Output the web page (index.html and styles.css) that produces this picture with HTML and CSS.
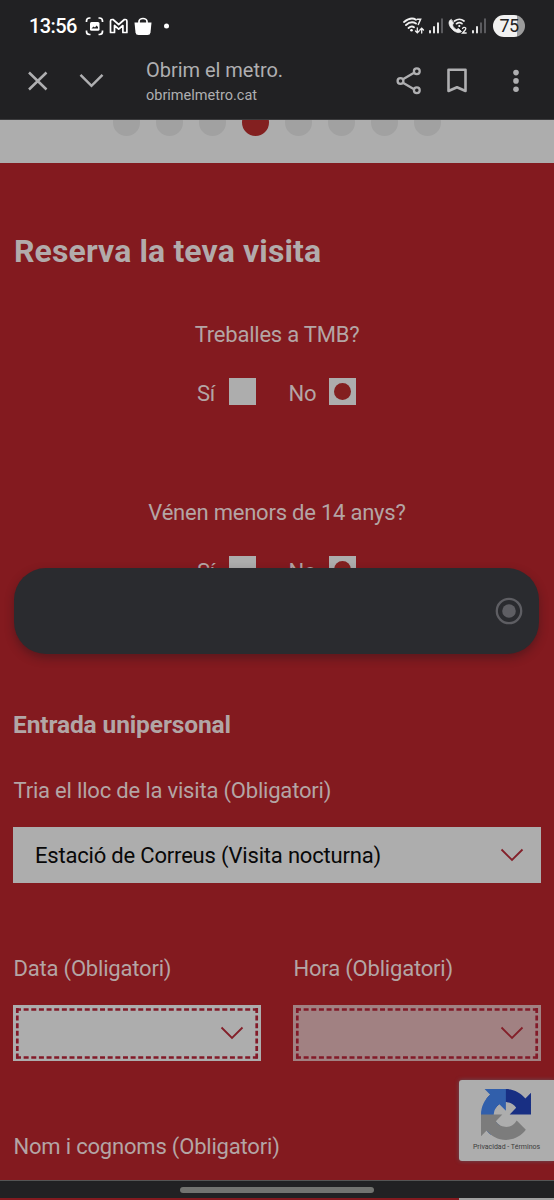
FILE: index.html
```html
<!DOCTYPE html>
<html lang="ca">
<head>
<meta charset="utf-8">
<title>Obrim el metro.</title>
<link rel="stylesheet" href="styles.css">
</head>
<body>
<div class="screen">
  <header class="chrome">
    <div class="status">
      <span class="clock">13:56</span>
      <svg class="status-left" width="84" height="24" viewBox="84 14 84 24" fill="none" stroke="#fff">
        <path d="M90.500 18h-1a3 3 0 0 0-3 3v1M98.500 18h1a3 3 0 0 1 3 3v1M90.500 34.500h-1a3 3 0 0 1-3-3v-1M98.500 34.500h1a3 3 0 0 0 3-3v-1" stroke-width="1.700"/>
        <rect x="90" y="22" width="9.500" height="8.800" rx="1.500" fill="#fff" stroke="none"/>
        <path d="M91.500 28.500l2-2 1.500 1 1.500-2 1.500 1.500v1.500z" fill="#222224" stroke="none"/>
        <path d="M110.500 32.500V21q0-1.500 1.500-1.500h1l5.700 5 5.700-5h1q1.500 0 1.500 1.500v11.500h-4V25.500l-4.200 3.700-4.200-3.700v7z" stroke-width="1.700" stroke-linejoin="round"/>
        <path d="M134.500 22.500h17l-1 10q-.3 2.500-3 2.500h-9q-2.700 0-3-2.500z" fill="#fff" stroke="none"/>
        <path d="M139 23v-1.500a4 3 0 0 1 8 0V23" stroke-width="1.700"/>
        <circle cx="166.500" cy="26" r="2.500" fill="#fff" stroke="none"/>
      </svg>
      <svg class="status-right" width="84" height="24" viewBox="402 14 84 24" fill="none" stroke="#f0f0f0" stroke-linecap="round">
        <path d="M404 22q7-5.500 12-2.200M406 25q5-4.500 10-1.500M408.500 28q3-2.500 5.500-.8" stroke-width="1.900"/>
        <circle cx="411.500" cy="30.300" r="1.300" fill="#fff" stroke="none"/>
        <path d="M417.300 19.300h3.300l-2.300 5.200" stroke-width="1.500"/>
        <path d="M417.300 28v4.500m-1.800-1.500 1.800 1.800 1.800-1.800M421.700 33v-4.500m-1.800 1.500 1.800-1.800 1.800 1.800" stroke-width="1.300"/>
        <path d="M430 31v1.500M434 27v5.500M438 23.200v9.300" stroke-width="1.900"/>
        <path d="M442 19v13.500" stroke="#66666a" stroke-width="1.700"/>
        <path d="M451 19.500c-3 1.500-2.500 5.500.5 9s7.500 5.500 10 3l-3-3-2 1c-2-1-3.500-2.500-4-4.500l1-2z" fill="#f0f0f0" stroke-width=".8"/>
        <path d="M454.500 21q5-3.500 9.500 0M456.500 23.700q3-2 5.500 0" stroke-width="1.700"/>
        <circle cx="459.300" cy="26" r="1.100" fill="#fff" stroke="none"/>
        <path d="M462.500 28.500q1-1.500 2.500-1t.2 2.500l-2.700 3h3.700" stroke-width="1.300"/>
        <path d="M473 31v1.500M477 27v5.500" stroke-width="1.900"/>
        <path d="M481 23.200v9.300M485 19v13.500" stroke="#66666a" stroke-width="1.700"/>
      </svg>
      <span class="battery">75</span>
    </div>
    <div class="toolbar">
      <svg width="78" height="24" viewBox="27 69 78 24" fill="none" stroke="#afafb1" stroke-width="2.500"><path d="M29 72.500l17.500 17M46.500 72.500L29 89.500M80.500 74.800l11 11 11-11"/></svg>
      <div class="page-info"><span class="page-title">Obrim el metro.</span><span class="page-url">obrimelmetro.cat</span></div>
      <svg width="124" height="30" viewBox="396 66 124 30" fill="none" stroke="#afafb1" stroke-width="2.300">
        <path d="M402.500 79.500l12-7M402.500 82.500l12 7"/>
        <circle cx="400.500" cy="81" r="2.900"/><circle cx="416.800" cy="71.300" r="2.900"/><circle cx="416.800" cy="90.300" r="2.900"/>
        <path d="M448.500 69.800h17V91l-8.500-3.700-8.500 3.700z" stroke-width="2.600" stroke-linejoin="round"/>
        <g fill="#afafb1" stroke="none"><circle cx="516" cy="72.600" r="2.800"/><circle cx="516" cy="80.900" r="2.800"/><circle cx="516" cy="89.200" r="2.800"/></g>
      </svg>
    </div>
  </header>
  <div class="steps"><i></i><i></i><i></i><i class="current"></i><i></i><i></i><i></i><i></i></div>
  <main class="form">
    <h1>Reserva la teva visita</h1>
    <section class="question">
      <p>Treballes a TMB?</p>
      <div class="options"><span>Sí</span><b class="radio"></b><span class="no">No</span><b class="radio checked"></b></div>
    </section>
    <section class="question">
      <p>Vénen menors de 14 anys?</p>
      <div class="options"><span>Sí</span><b class="radio"></b><span class="no">No</span><b class="radio checked"></b></div>
    </section>
    <h2>Entrada unipersonal</h2>
    <label class="place">Tria el lloc de la visita (Obligatori)</label>
    <div class="select"><span>Estació de Correus (Visita nocturna)</span><svg class="arrow" width="24" height="14" viewBox="0 0 24 14"><path d="M1.500 1.500L12 12 22.500 1.500"/></svg></div>
    <div class="row">
      <div class="field"><label>Data (Obligatori)</label>
        <div class="select required"><svg class="dashes" width="248" height="56"><path class="h" d="M3 4.500h242M3 52.500h242"/><path class="v" d="M4.300 3v51M243.700 3v51"/></svg><svg class="arrow" width="24" height="14" viewBox="0 0 24 14"><path d="M1.500 1.500L12 12 22.500 1.500"/></svg></div></div>
      <div class="field"><label>Hora (Obligatori)</label>
        <div class="select required disabled"><svg class="dashes" width="248" height="56"><path class="h" d="M3 4.500h242M3 52.500h242"/><path class="v" d="M4.300 3v51M243.700 3v51"/></svg><svg class="arrow" width="24" height="14" viewBox="0 0 24 14"><path d="M1.500 1.500L12 12 22.500 1.500"/></svg></div></div>
    </div>
    <label class="name">Nom i cognoms (Obligatori)</label>
  </main>
  <div class="toast"><svg width="28" height="28" viewBox="0 0 28 28"><circle cx="14" cy="14" r="12.200" fill="none" stroke="#5e5e63" stroke-width="2.300"/><circle cx="14" cy="14" r="6.800" fill="#5e5e63"/></svg></div>
  <aside class="captcha">
    <svg width="50" height="51" viewBox="0 0 64 64" preserveAspectRatio="none">
      <path fill="#182f83" d="M64 31.955l-.033-1.370V4.687l-7.160 7.160C50.948 4.674 42.033.093 32.050.093c-10.400 0-19.622 4.960-25.458 12.640l11.736 11.860a15.550 15.550 0 0 1 4.754-5.334c2.050-1.600 4.952-2.906 8.968-2.906.485 0 .860.057 1.135.163 4.976.393 9.288 3.140 11.828 7.124l-8.307 8.307L64 31.953"/>
      <path fill="#315fab" d="M31.862.094l-1.370.033H4.594l7.160 7.160C4.580 13.147 0 22.060 0 32.046c0 10.400 4.960 19.622 12.640 25.458L24.500 45.768a15.550 15.550 0 0 1-5.334-4.754c-1.600-2.050-2.906-4.952-2.906-8.968 0-.485.057-.860.163-1.135.393-4.976 3.140-9.288 7.124-11.828l8.307 8.307L31.860.095"/>
      <path fill="#7c7c7c" d="M.001 32.045l.033 1.370v25.898l7.160-7.160c5.860 7.173 14.774 11.754 24.760 11.754 10.400 0 19.622-4.960 25.458-12.640l-11.736-11.860a15.550 15.550 0 0 1-4.754 5.334c-2.050 1.600-4.952 2.906-8.968 2.906-.485 0-.860-.057-1.135-.163-4.976-.393-9.288-3.140-11.828-7.124l8.307-8.307c-10.522.040-22.400.066-27.295-.005"/>
    </svg>
    <span>Privacidad - Términos</span>
  </aside>
  <div class="navbar"><i></i></div>
  <div class="below"></div>
</div>
</body>
</html>
```

FILE: styles.css
```css
* { box-sizing: border-box; }
body { margin: 0; font-family: Roboto, sans-serif; }
.screen { position: relative; width: 554px; height: 1200px; overflow: hidden; background: #831a1f; color: #b4a5a5; }
svg { display: block; flex: none; }
.chrome { height: 120px; background: #212123; border-bottom: 1px solid #3b3b3d; }
.status { display: flex; align-items: center; height: 52px; padding: 0 29px 0 29px; }
.clock { width: 55px; color: #fff; font: 500 20px/24px Roboto, sans-serif; letter-spacing: -0.6px; white-space: nowrap; }
.status-left { overflow: visible; }
.status-right { margin-left: 234px; overflow: visible; }
.battery { width: 32px; height: 22px; margin-left: 7px; border-radius: 11px; flex: none; background: linear-gradient(90deg, #f1f1f1 76%, #9c9c9c 76%); color: #222; font-size: 18px; line-height: 22px; letter-spacing: -0.5px; text-align: center; }
.toolbar { display: flex; align-items: center; height: 58px; padding-left: 27px; }
.page-info { display: flex; flex-direction: column; width: 250px; margin-left: 41px; padding-top: 3px; color: #afafb1; }
.page-title { font-size: 20px; line-height: 26px; letter-spacing: -0.03px; }
.page-url { font-size: 14.500px; line-height: 25px; }
.steps { display: flex; justify-content: center; gap: 16px; height: 43px; overflow: hidden; background: #adadad; }
.steps i { width: 27px; height: 27px; margin-top: -11px; border-radius: 50%; background: #a1a1a1; }
.steps .current { background: #832020; }
.form { padding: 0 13px; font-size: 22px; letter-spacing: -0.19px; }
h1 { margin: 0; padding: 68px 0 0 1px; height: 152px; font-size: 32px; line-height: 40px; letter-spacing: 0.12px; color: #b2abab; }
.question { height: 178px; }
.question p { margin: 0; padding-top: 6px; line-height: 28px; text-align: center; letter-spacing: -0.22px; }
.options { display: flex; align-items: center; height: 28px; margin-top: 28px; padding-left: 184px; line-height: 28px; }
.options span { width: 32px; padding-top: 5px; }
.options .no { width: 40.500px; margin-left: 32.500px; }
.radio { width: 27px; height: 27px; background: #adadad; }
.checked { padding: 5px 5px 6px 5px; }
.checked::before { content: ""; display: block; width: 17px; height: 17px; border-radius: 50%; background: #832020; }
h2 { margin: 0; height: 68px; padding-top: 39px; font-size: 24.500px; line-height: 30px; letter-spacing: -0.12px; color: #b2a6a6; }
label { display: block; padding-left: 0.500px; line-height: 30px; }
.place { margin-top: 37px; }
.select { position: relative; display: flex; align-items: center; justify-content: space-between; height: 56px; margin-top: 21px; padding: 0 17px 0 22px; background: #adadad; color: #080808; }
.arrow { fill: none; stroke: #831f29; stroke-width: 1.800; }
.row { display: flex; justify-content: space-between; margin-top: 71px; }
.field { width: 248px; }
.required { justify-content: flex-end; }
.disabled { background: #a18182; }
.dashes { position: absolute; top: 0; left: 0; fill: none; stroke: #831a28; stroke-width: 2.700; }
.h { stroke-dasharray: 5 2.640; }
.v { stroke-dasharray: 5 2.600; }
.name { margin-top: 71px; }
.toast { position: absolute; left: 14px; top: 568px; width: 525px; height: 86px; padding: 29px 16px; border-radius: 32px; background: #2a2b2f; box-shadow: 0 4px 10px rgba(30, 20, 25, .4); display: flex; justify-content: flex-end; }
.captcha { position: absolute; left: 459px; top: 1080px; width: 95px; height: 81px; padding-top: 9px; border-radius: 3px 0 0 3px; background: #adadad; box-shadow: 0 0 4px #66505a; color: #3c3c3c; font-size: 7px; line-height: 14px; }
.captcha svg { margin-left: 22px; }
.captcha span { display: block; width: 95px; text-align: center; }
.navbar { position: absolute; left: 0; top: 1180px; width: 554px; height: 18px; padding: 6px 180px; background: #212123; border-top: 1px solid #555; }
.navbar i { display: block; height: 6px; border-radius: 3px; background: #727370; }
.below { position: absolute; left: 459px; top: 1198px; width: 95px; height: 2px; background: #a0a0a0; }
```
